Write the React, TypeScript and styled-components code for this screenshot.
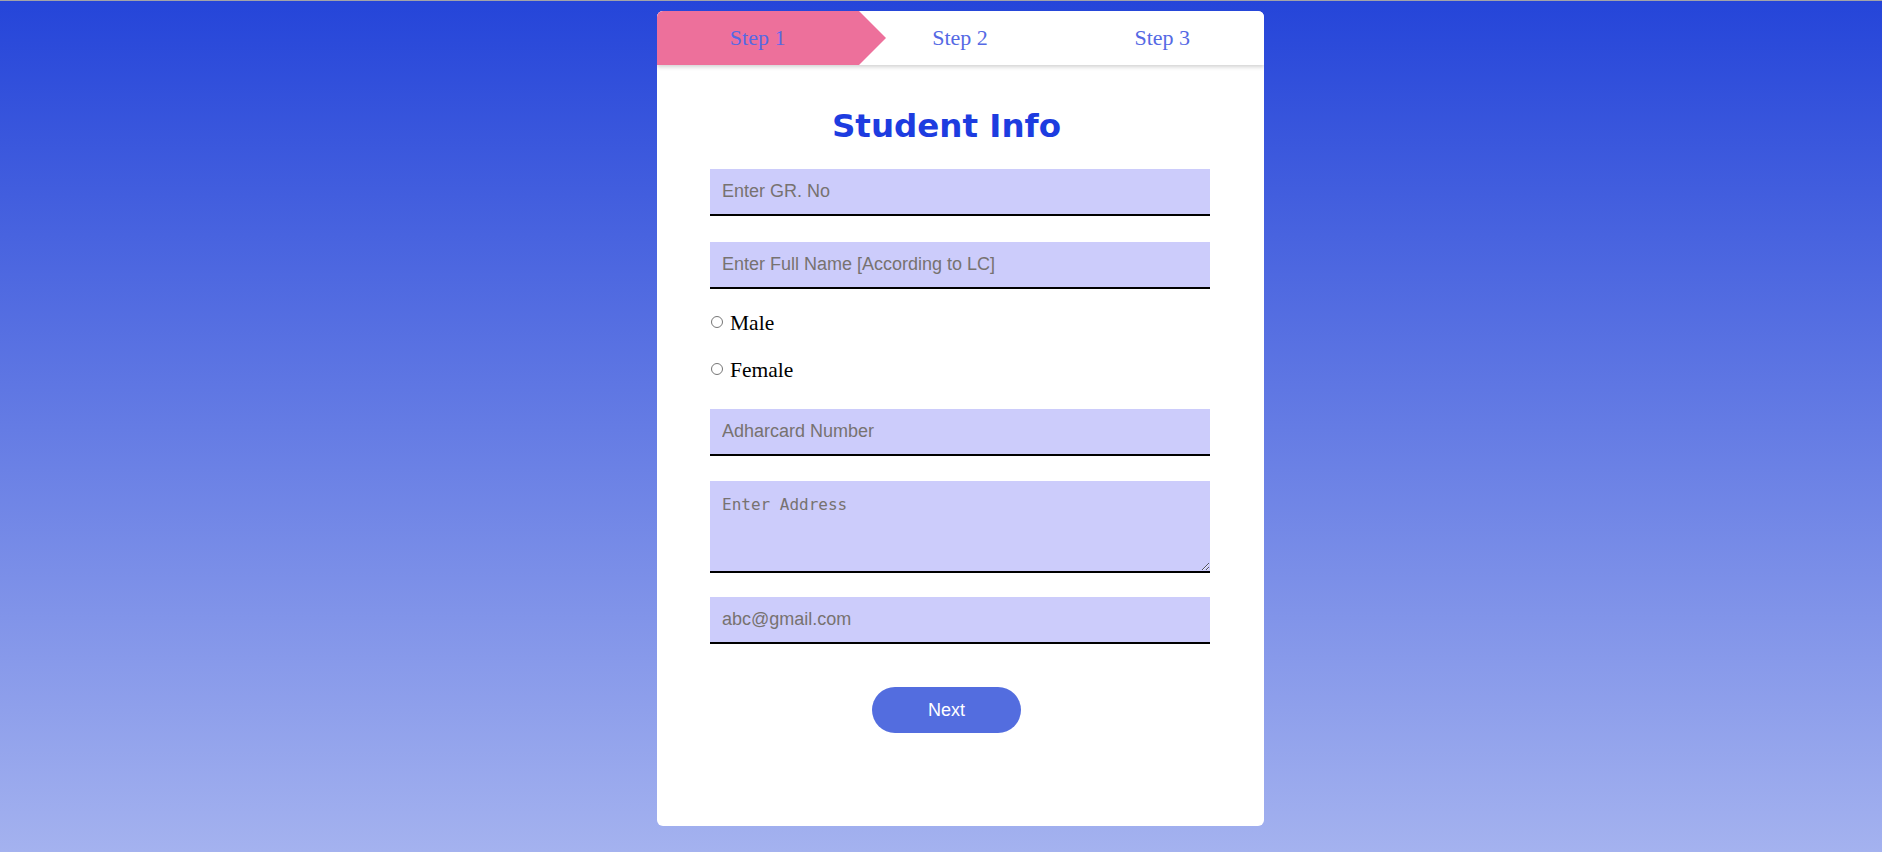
import styled, { createGlobalStyle } from "styled-components";

const GlobalStyle = createGlobalStyle`
  html, body {
    margin: 0;
    padding: 0;
  }
  body {
    font-family: "Liberation Serif", "Times New Roman", serif;
  }
  * {
    box-sizing: border-box;
  }
`;

type StepProps = {
  $active?: boolean;
};

const steps = ["Step 1", "Step 2", "Step 3"];

const App = () => {
  return (
    <Page>
      <GlobalStyle />
      <Card>
        <StepBar>
          {steps.map((step, index) => (
            <Step key={step} $active={index === 0}>
              {step}
            </Step>
          ))}
        </StepBar>
        <Form onSubmit={(e) => e.preventDefault()}>
          <Title>Student Info</Title>
          <Input type="text" placeholder="Enter GR. No" $gap={26} />
          <Input
            type="text"
            placeholder="Enter Full Name [According to LC]"
            $gap={19}
          />
          <RadioRow $gap={17}>
            <Radio type="radio" name="gender" id="male" />
            <RadioLabel htmlFor="male">Male</RadioLabel>
          </RadioRow>
          <RadioRow $gap={24}>
            <Radio type="radio" name="gender" id="female" />
            <RadioLabel htmlFor="female">Female</RadioLabel>
          </RadioRow>
          <Input type="text" placeholder="Adharcard Number" $gap={25} />
          <Address placeholder="Enter Address" />
          <Input type="email" placeholder="abc@gmail.com" $gap={43} />
          <NextButton type="button">Next</NextButton>
        </Form>
      </Card>
    </Page>
  );
};

export default App;

const Page = styled.div`
  min-height: 100vh;
  border-top: 1px solid #a3a3a8;
  background: linear-gradient(to bottom, #2545d9 0%, #a4b2ef 100%);
  display: flex;
  justify-content: center;
  align-items: flex-start;
  padding: 10px 0 0 38px;
`;

const Card = styled.div`
  width: 607px;
  height: 815px;
  background-color: #ffffff;
  border-radius: 6px;
  overflow: hidden;
`;

const StepBar = styled.div`
  display: grid;
  grid-template-columns: repeat(3, 1fr);
  height: 54px;
  background-color: #ffffff;
  box-shadow: 0 2px 4px rgba(0, 0, 0, 0.18);
  position: relative;
  z-index: 1;
`;

const Step = styled.div<StepProps>`
  position: relative;
  display: flex;
  align-items: center;
  justify-content: center;
  font-family: "Liberation Serif", "Times New Roman", serif;
  font-size: 22px;
  color: #5569e4;
  background-color: ${(props) => (props.$active ? "#ed709b" : "transparent")};

  &::after {
    content: "";
    display: ${(props) => (props.$active ? "block" : "none")};
    position: absolute;
    top: 0;
    right: -27px;
    border-top: 27px solid transparent;
    border-bottom: 27px solid transparent;
    border-left: 27px solid #ed709b;
  }
`;

const Form = styled.form`
  display: flex;
  flex-direction: column;
  align-items: center;
  padding-top: 43px;
`;

const Title = styled.h1`
  margin: 0 27px 24px 0;
  font-family: "DejaVu Sans", Verdana, sans-serif;
  font-weight: bold;
  font-size: 32.5px;
  line-height: 37px;
  color: #1d3ce0;
`;

const Input = styled.input<{ $gap: number }>`
  width: 500px;
  height: 47px;
  margin: 0 0 ${(props) => props.$gap}px;
  padding: 0 12px;
  border: none;
  border-bottom: 2px solid #000000;
  background-color: #ccccfb;
  font-family: "Liberation Sans", Arial, sans-serif;
  font-size: 18px;
  color: #222222;
  outline: none;

  &::placeholder {
    color: #777270;
  }
`;

const Address = styled.textarea`
  width: 500px;
  height: 92px;
  margin: 0 0 24px;
  padding: 14px 12px 0;
  border: none;
  border-bottom: 2px solid #000000;
  background-color: #ccccfb;
  font-family: "DejaVu Sans Mono", "Liberation Mono", monospace;
  font-size: 16px;
  outline: none;

  &::placeholder {
    color: #777270;
  }
`;

const RadioRow = styled.div<{ $gap: number }>`
  width: 500px;
  height: 30px;
  display: flex;
  align-items: center;
  margin-bottom: ${(props) => props.$gap}px;
`;

const Radio = styled.input`
  appearance: none;
  width: 12px;
  height: 12px;
  margin: 0 7px 2px 1px;
  border: 1px solid #767676;
  border-radius: 50%;
  background-color: #ffffff;

  &:checked {
    background: radial-gradient(circle, #1d3ce0 0 3px, #ffffff 3.5px);
  }
`;

const RadioLabel = styled.label`
  font-family: "Liberation Serif", "Times New Roman", serif;
  font-size: 21.5px;
  color: #000000;
`;

const NextButton = styled.button`
  width: 149px;
  height: 46px;
  margin-right: 27px;
  border: none;
  border-radius: 23px;
  background-color: #536ddf;
  color: #ffffff;
  font-family: "Liberation Sans", Arial, sans-serif;
  font-size: 18px;
  cursor: pointer;
`;
